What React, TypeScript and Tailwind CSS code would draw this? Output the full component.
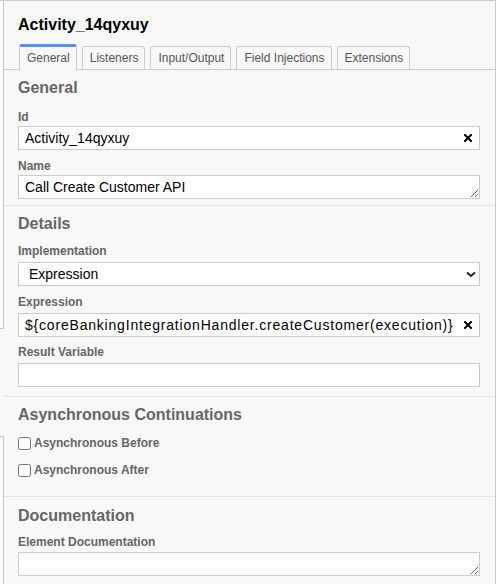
import React from 'react';

const font = { fontFamily: '"Liberation Sans", Arial, sans-serif' };

const tabs = ['General', 'Listeners', 'Input/Output', 'Field Injections', 'Extensions'];

const ClearIcon = () => (
  <svg width="8" height="8" viewBox="0 0 8 8" className="text-black">
    <path d="M1 1L7 7M7 1L1 7" stroke="currentColor" strokeWidth="2" strokeLinecap="square" />
  </svg>
);

const Label: React.FC<{ text: string; className?: string }> = ({ text, className = '' }) => (
  <div className={`text-[12px] leading-[14px] font-bold text-[#666] ${className}`}>{text}</div>
);

const TextInput: React.FC<{ value: string; clear?: boolean; className?: string }> = ({
  value,
  clear,
  className = '',
}) => (
  <div className="relative">
    <input
      type="text"
      defaultValue={value}
      className={`block w-full h-[24px] border border-[#ccc] bg-white pl-[6px] pr-[20px] text-[14px] text-black outline-none ${className}`}
    />
    {clear && (
      <button type="button" className="absolute right-[8px] top-[8px] leading-none">
        <ClearIcon />
      </button>
    )}
  </div>
);

const TextArea: React.FC<{ value: string }> = ({ value }) => (
  <textarea
    defaultValue={value}
    rows={1}
    className="block w-full h-[24px] border border-[#ccc] bg-white px-[6px] pt-[2px] text-[14px] leading-[18px] text-black outline-none overflow-hidden"
  />
);

const Heading: React.FC<{ text: string }> = ({ text }) => (
  <div className="text-[16px] leading-[20px] font-bold text-[#666]">{text}</div>
);

export default function App() {
  return (
    <div className="flex w-[501px] h-[584px] bg-white overflow-hidden" style={font}>
      {/* shapes peeking behind the panel */}
      <div className="flex flex-col w-[4px] shrink-0">
        <div className="h-[329px] border-t border-r border-b border-[#ccc] bg-white" />
        <div className="h-[107px] bg-[#f8f8f8]" />
        <div className="flex-1 border-t border-r border-[#ccc] bg-white" />
      </div>

      <div className="w-[492px] shrink-0 bg-[#f8f8f8] border-t border-r border-[#ccc]">
        <div className="pl-[14px] pt-[14px] text-[16px] leading-[20px] font-bold text-black">
          Activity_14qyxuy
        </div>

        {/* Tabs */}
        <div className="mt-[9px] flex items-end gap-[5px] pl-[15px] h-[26px] border-b border-[#ccc]">
          {tabs.map((t, i) =>
            i === 0 ? (
              <div
                key={t}
                className="relative -mb-px h-[26px] border-t-[3px] border-x border-t-[#4d90fe] border-x-[#ccc] rounded-t-[3px] bg-[#f8f8f8] pl-[7px] pr-[6px] text-[12px] leading-[22px] text-[#555]"
              >
                {t}
              </div>
            ) : (
              <div
                key={t}
                className="h-[23px] border border-b-0 border-[#ccc] rounded-t-[3px] bg-[#f8f8f8] pl-[7px] pr-[6px] text-[12px] leading-[22px] text-[#555]"
              >
                {t}
              </div>
            )
          )}
        </div>

        {/* General */}
        <div className="pl-[14px] pr-[15px] pt-[8px] pb-[6px] border-b border-[#e6e6e6]">
          <Heading text="General" />
          <Label text="Id" className="mt-[12px] mb-[2px]" />
          <TextInput value="Activity_14qyxuy" clear />
          <Label text="Name" className="mt-[9px] mb-[2px]" />
          <TextArea value="Call Create Customer API" />
        </div>

        {/* Details */}
        <div className="pl-[14px] pr-[15px] pt-[8px] pb-[9px] border-b border-[#e6e6e6]">
          <Heading text="Details" />
          <Label text="Implementation" className="mt-[10px] mb-[4px]" />
          <div className="relative">
            <select
              defaultValue="expression"
              className="block w-full h-[24px] appearance-none border border-[#ccc] bg-white pl-[10px] text-[14px] text-black outline-none"
            >
              <option value="class">Java Class</option>
              <option value="expression">Expression</option>
              <option value="delegateExpression">Delegate Expression</option>
            </select>
            <svg
              width="10"
              height="7"
              viewBox="0 0 10 7"
              className="absolute right-[4px] top-[9px] pointer-events-none"
            >
              <path d="M1 1.5L5 5L9 1.5" fill="none" stroke="#222" strokeWidth="2" />
            </svg>
          </div>
          <Label text="Expression" className="mt-[9px] mb-[4px]" />
          <TextInput
            value="${coreBankingIntegrationHandler.createCustomer(execution)}"
            clear
            className="tracking-[0.8px]"
          />
          <Label text="Result Variable" className="mt-[8px] mb-[4px]" />
          <TextInput value="" />
        </div>

        {/* Asynchronous Continuations */}
        <div className="pl-[14px] pr-[15px] pt-[8px] pb-[19px] border-b border-[#e6e6e6]">
          <Heading text="Asynchronous Continuations" />
          <label className="mt-[11px] flex items-center gap-[3px] h-[14px]">
            <input type="checkbox" className="m-0 w-[13px] h-[13px]" />
            <span className="text-[12px] leading-[14px] font-bold text-[#666]">Asynchronous Before</span>
          </label>
          <label className="mt-[13px] flex items-center gap-[3px] h-[14px]">
            <input type="checkbox" className="m-0 w-[13px] h-[13px]" />
            <span className="text-[12px] leading-[14px] font-bold text-[#666]">Asynchronous After</span>
          </label>
        </div>

        {/* Documentation */}
        <div className="pl-[14px] pr-[15px] pt-[9px]">
          <Heading text="Documentation" />
          <Label text="Element Documentation" className="mt-[9px] mb-[3px]" />
          <TextArea value="" />
        </div>
      </div>
    </div>
  );
}
